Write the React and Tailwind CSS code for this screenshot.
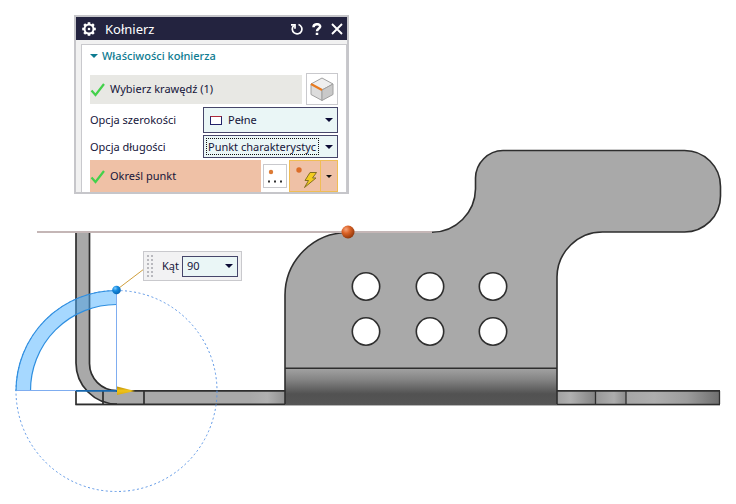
import React, { useState } from 'react';

const HOLES = [366, 430, 493].flatMap((x) => [286.5, 331.5].map((y) => ({ x, y })));

const Arrow = ({ className = '' }) => (
  <svg className={`h-1 w-2 shrink-0 ${className}`} viewBox="0 0 8 4" aria-hidden="true">
    <path d="M0 0h8L4 4z" fill="currentColor" />
  </svg>
);

const Check = () => (
  <svg className="h-4 w-4 shrink-0" viewBox="0 0 16 16" fill="none" aria-hidden="true">
    <path d="M1.5 9.5L5.5 14L14 3" stroke="#43d14b" strokeWidth="2.2" />
  </svg>
);

const Gear = () => (
  <svg className="h-4 w-4 shrink-0" viewBox="-8 -8 16 16" aria-hidden="true">
    {[0, 45, 90, 135].map((a) => (
      <rect key={a} x="-1.3" y="-6.8" width="2.6" height="13.6" fill="#fff" transform={`rotate(${a})`} />
    ))}
    <circle r="4.5" fill="#23233f" stroke="#fff" strokeWidth="2" />
    <circle r="1.3" fill="#fff" />
  </svg>
);

const Cube = () => (
  <svg className="h-6 w-6" viewBox="0 0 24 24" strokeLinejoin="round" aria-hidden="true">
    <path d="M12 1L23 7L12 13L1 7z" fill="#efefef" stroke="#a0a0a0" />
    <path d="M1 7L12 13V23.500L1 17.500z" fill="#dcdcdc" stroke="#a0a0a0" />
    <path d="M23 7L12 13V23.500L23 17.500z" fill="#c9c9c9" stroke="#a0a0a0" />
    <path d="M1 7L12 13" stroke="#e87a1e" strokeWidth="2" />
  </svg>
);

const Model = () => (
  <svg className="block h-screen w-full" role="img" aria-label="Model">
    <defs>
      <linearGradient id="bend" x1="0" y1="0" x2="0" y2="1">
        <stop offset="0" stopColor="#a3a3a3" />
        <stop offset="0.3" stopColor="#868686" />
        <stop offset="0.7" stopColor="#525252" />
        <stop offset="1" stopColor="#555" />
      </linearGradient>
      <linearGradient id="edgeA" x1="0" x2="1">
        <stop offset="0" stopColor="#a0a0a0" />
        <stop offset="0.35" stopColor="#b0b0b0" />
        <stop offset="1" stopColor="#828282" />
      </linearGradient>
      <linearGradient id="edgeB" x1="0" x2="1">
        <stop offset="0" stopColor="#989898" />
        <stop offset="0.6" stopColor="#adadad" />
        <stop offset="1" stopColor="#8c8c8c" />
      </linearGradient>
      <linearGradient id="edgeC" x1="0" x2="1">
        <stop offset="0" stopColor="#a6a6a6" />
        <stop offset="0.3" stopColor="#aeaeae" />
        <stop offset="0.65" stopColor="#9c9c9c" />
        <stop offset="1" stopColor="#6e6e6e" />
      </linearGradient>
      <linearGradient id="edgeD" x1="0" x2="1">
        <stop offset="0" stopColor="#a9a9a9" />
        <stop offset="0.5" stopColor="#b0b0b0" />
        <stop offset="1" stopColor="#929292" />
      </linearGradient>
      <linearGradient id="cone" x1="0" y1="0" x2="0" y2="1">
        <stop offset="0" stopColor="#b98a08" />
        <stop offset="0.5" stopColor="#f0c41a" />
        <stop offset="1" stopColor="#d9a90c" />
      </linearGradient>
      <radialGradient id="orangeBall" cx="0.35" cy="0.3" r="0.75">
        <stop offset="0" stopColor="#f5a47c" />
        <stop offset="0.4" stopColor="#dc6428" />
        <stop offset="1" stopColor="#8d3509" />
      </radialGradient>
      <radialGradient id="blueBall" cx="0.35" cy="0.3" r="0.75">
        <stop offset="0" stopColor="#7cccff" />
        <stop offset="0.4" stopColor="#168be0" />
        <stop offset="1" stopColor="#0563b0" />
      </radialGradient>
    </defs>

    {/* base plate */}
    <rect x="117" y="391" width="168" height="14" fill="#a9a9a9" />
    <rect x="250" y="391" width="35" height="13" fill="url(#edgeD)" />
    <rect x="557" y="391" width="39" height="13" fill="url(#edgeA)" />
    <rect x="596" y="391" width="30" height="13" fill="url(#edgeB)" />
    <rect x="626" y="391" width="94" height="13" fill="url(#edgeC)" />

    {/* bent flange */}
    <path d="M76 233V363A41 41 0 0 0 117 404H145V391H117A27 27 0 0 1 90 363V233z" fill="#a9a9a9" />
    <g fill="none" stroke="#2e2e2e" strokeWidth="1.700">
      <path d="M76 233V363A41 41 0 0 0 117 404" />
      <path d="M89.500 233V363A27 27 0 0 0 117 390.500" />
      <path d="M116 390.800H285" />
      <path d="M76 391V404.300H285" />
      <path d="M103 391V404M144 391V404" />
      <path d="M557 390.800H720" />
      <path d="M557 404.300H720" strokeWidth="1.300" />
      <path d="M595.500 391V404M626 391V404M719.500 391V404" strokeWidth="1.300" />
    </g>
    <path d="M76 405.500H720" stroke="#b5b5b5" />

    {/* bracket */}
    <path
      d="M285 404V295A63 63 0 0 1 348 232.500H432A44 44 0 0 0 475.500 189V178A28 28 0 0 1 503 150.500H684A36 36 0 0 1 720.500 187V196A36 36 0 0 1 684 232H603A45.500 45.500 0 0 0 557 277V404z"
      fill="#a9a9a9"
    />
    <rect x="285" y="368" width="272" height="37" fill="url(#bend)" />
    <g fill="none" stroke="#2e2e2e" strokeWidth="1.600">
      <path d="M285 404V295A63 63 0 0 1 348 232.500" />
      <path d="M432 232.300A44 44 0 0 0 475.500 189V178A28 28 0 0 1 503 150.500H684A36 36 0 0 1 720.500 187V196A36 36 0 0 1 684 232H603A45.500 45.500 0 0 0 557 277V404" />
      <path d="M285 368.300H557" />
    </g>
    {HOLES.map(({ x, y }) => (
      <circle key={`${x}-${y}`} cx={x} cy={y} r="13.700" fill="#fff" stroke="#2e2e2e" strokeWidth="1.600" />
    ))}

    <path d="M37 232H432" stroke="#c4b6b6" strokeWidth="1.800" />
    <circle cx="348" cy="232" r="6.500" fill="url(#orangeBall)" />

    {/* angle handle */}
    <circle cx="116.500" cy="391" r="100.500" fill="none" stroke="#5a95e6" strokeDasharray="2 2.500" />
    <path
      d="M16 391A100.500 100.500 0 0 1 116.500 290.500V304.500A86 86 0 0 0 30.500 391z"
      fill="#4db1ff"
      fillOpacity="0.500"
    />
    <path
      d="M16 391A100.500 100.500 0 0 1 116.500 290.500M116.500 304.500A86 86 0 0 0 30.500 391"
      fill="none"
      stroke="#2f8fe0"
      strokeWidth="1.200"
    />
    <path d="M16.500 390.500H76M116.500 290V391" stroke="#7fadf0" fill="none" />
    <path d="M76 390.800H117" stroke="#1767ae" strokeWidth="1.800" />
    <path d="M119 288L144 269" stroke="#d0a03e" />
    <path d="M117 386.500L135 391L117 395z" fill="url(#cone)" />
    <circle cx="116.500" cy="290" r="4.300" fill="url(#blueBall)" />
  </svg>
);

const FlangeDialog = () => {
  const [open, setOpen] = useState(true);

  return (
    <section className="absolute left-[74px] top-[15px] w-[275px] border-2 border-[#c6c6ca] bg-[#f1f1f1]">
      <header className="flex h-[23px] items-center bg-[#23233f] pl-[5px] text-white">
        <Gear />
        <h1 className="ml-2 flex-1 text-[13px] leading-4">Kołnierz</h1>
        <button aria-label="Reset" className="mr-2">
          <svg className="h-3 w-3" viewBox="0 0 12 12" fill="none" stroke="#fff" strokeWidth="1.700">
            <path d="M7.500 1.500A4.800 4.800 0 1 1 2.800 2.600" />
            <path d="M0 1.800H4V5.800" />
          </svg>
        </button>
        <button aria-label="Pomoc" className="mr-2 w-3 text-center">
          <svg className="h-3 w-3" viewBox="0 0 12 12" fill="none" stroke="#fff" strokeWidth="2.500">
            <path d="M2.500 4.200C2.500 0.300 9.200 0.300 9.200 3.500C9.200 5.500 6 5.400 6 8.200M6 9.700V12" />
          </svg>
        </button>
        <button aria-label="Zamknij" className="mr-1">
          <svg className="h-3 w-3" viewBox="0 0 12 12" stroke="#fff" strokeWidth="1.900">
            <path d="M1 1L11 11M11 1L1 11" />
          </svg>
        </button>
      </header>

      <div className="pl-[5px] pt-1">
        <div className="border border-b-0 border-[#c9c9cd] bg-white px-2">
          <button
            onClick={() => setOpen(!open)}
            className="flex h-7 items-center pb-1.5 font-medium text-[#0d7b91]"
          >
            <Arrow />
            <span className="ml-1">Właściwości kołnierza</span>
          </button>

          {open && (
            <div className="flex flex-col gap-0.5">
              <div className="flex h-8 items-center justify-between">
                <div className="flex h-[29px] w-[212px] items-center gap-1 bg-[#e8e8e4]">
                  <Check />
                  <span>Wybierz krawędź (1)</span>
                </div>
                <button
                  aria-label="Krawędź"
                  className="flex h-8 w-8 items-center justify-center border border-[#c9c9cd] bg-white"
                >
                  <Cube />
                </button>
              </div>

              <div className="flex h-[26px] items-center justify-between">
                <label htmlFor="width">Opcja szerokości</label>
                <div className="flex h-full w-[135px] items-center border border-[#46466a] bg-[#eaf6f6] pl-1.5 pr-1">
                  <span className="h-[9px] w-3 shrink-0 border border-t-[#b02a3a] border-x-[#23236a] border-b-[#23236a] bg-white" />
                  <select id="width" className="ml-1.5 min-w-0 flex-1 appearance-none bg-transparent outline-none">
                    <option>Pełne</option>
                  </select>
                  <Arrow className="text-[#0b0b35]" />
                </div>
              </div>

              <div className="flex h-[23px] items-center justify-between">
                <label htmlFor="length">Opcja długości</label>
                <div className="flex h-full w-[135px] items-center justify-between border border-[#46466a] bg-[#eaf6f6] pl-0.5 pr-1">
                  <select
                    id="length"
                    className="h-[17px] w-[113px] appearance-none border border-dotted border-[#111] bg-transparent pl-px leading-[15px] outline-none"
                  >
                    <option>Punkt charakterystyc</option>
                  </select>
                  <Arrow className="text-[#0b0b35]" />
                </div>
              </div>

              <div className="flex h-8 items-center justify-between">
                <div className="flex h-full w-[171px] items-center gap-1 bg-[#efc1a6]">
                  <Check />
                  <span>Określ punkt</span>
                </div>
                <button aria-label="Okno punktu" className="h-6 w-6 border border-[#c9c9cd] bg-white">
                  <svg className="h-full w-full" viewBox="0 0 22 22">
                    <circle cx="7" cy="7" r="2.200" fill="#dc7a35" />
                    <path d="M4 16.500h2M10 16.500h2M16 16.500h2" stroke="#333" strokeWidth="2" />
                  </svg>
                </button>
                <div className="flex h-full w-[49px] border border-[#f0bd55] bg-[#efc1a6]">
                  <button aria-label="Punkt wnioskowany" className="flex-1 border-r border-[#f0bd55]">
                    <svg className="h-full w-full" viewBox="0 0 30 30">
                      <circle cx="9" cy="9" r="2.700" fill="#dc6d28" />
                      <path
                        d="M20 11.500H26.500L22.500 17H26L14.500 26.500L18.500 19.500H15z"
                        fill="#f3cc1f"
                        stroke="#85701f"
                        strokeLinejoin="round"
                      />
                    </svg>
                  </button>
                  <button aria-label="Więcej" className="flex w-4 items-center justify-center">
                    <svg className="h-[3px] w-[6px]" viewBox="0 0 6 3">
                      <path d="M0 0h6L3 3z" fill="#111" />
                    </svg>
                  </button>
                </div>
              </div>
            </div>
          )}
        </div>
      </div>
    </section>
  );
};

const AngleBox = () => (
  <div className="absolute left-[143px] top-[251px] flex items-center border border-[#c9c9cd] bg-[#f2f2f3] p-[3px]">
    <svg className="h-[22px] w-[7px]" viewBox="0 0 7 22" aria-hidden="true">
      {[0, 4, 8, 12, 16, 20].map((y) => (
        <path key={y} d={`M0 ${y}h2v2h-2zM4 ${y}h2v2h-2z`} fill="#b9b9be" />
      ))}
    </svg>
    <label htmlFor="angle" className="ml-2 w-5">Kąt</label>
    <div className="flex h-[21px] w-14 items-center border border-[#46466a] bg-[#eaf6f6] pl-1 pr-1">
      <select id="angle" className="min-w-0 flex-1 appearance-none bg-transparent outline-none">
        <option>90</option>
      </select>
      <Arrow className="text-[#0b0b35]" />
    </div>
  </div>
);

const App = () => {
  return (
    <main className="relative min-h-screen overflow-hidden bg-white font-['Noto_Sans','Open_Sans',sans-serif] text-[11px] leading-4 text-[#15153a]">
      <Model />
      <FlangeDialog />
      <AngleBox />
    </main>
  );
};

export default App;
